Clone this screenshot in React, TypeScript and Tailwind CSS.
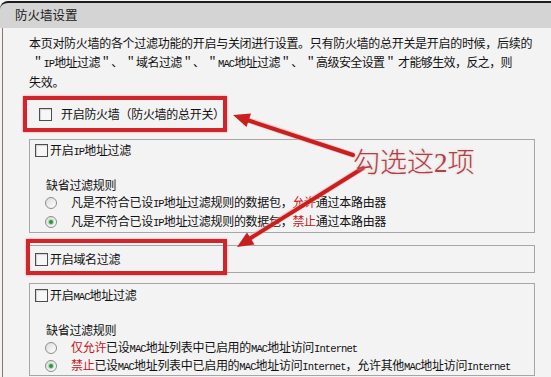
import React from "react";

function Latin({ children }: { children: React.ReactNode }) {
  return (
    <span className="font-['Liberation_Mono',monospace] text-[10.5px] tracking-[-0.9px]">
      {children}
    </span>
  );
}

function Checkbox() {
  return (
    <span className="inline-block w-[13px] h-[13px] border border-[#4d4d4d] bg-[#f7f7f7] shrink-0 shadow-[inset_1px_1px_1px_#d0d0d0]" />
  );
}

function Radio({ checked }: { checked?: boolean }) {
  return (
    <span className="w-[12px] h-[12px] rounded-full border border-[#8c8c8c] bg-gradient-to-br from-[#dcdcdc] to-[#ffffff] flex items-center justify-center shrink-0">
      {checked && (
        <span className="w-[6px] h-[6px] rounded-full bg-[#a8dcb0] flex items-center justify-center">
          <span className="w-[4px] h-[4px] rounded-full bg-[#2e9444]" />
        </span>
      )}
    </span>
  );
}

function Red({ children }: { children: React.ReactNode }) {
  return <span className="text-[#c4161c]">{children}</span>;
}

export default function App() {
  return (
    <div className="w-[551px] h-[377px] bg-[#f3f3f3] relative overflow-hidden font-['Noto_Sans_CJK_SC',sans-serif] text-[12px] tracking-[-0.3px] text-[#111]">
      {/* title bar */}
      <div className="mt-[1px] h-[27px] border-t-2 border-[#1c1c1c] rounded-tl-[8px] bg-[#d4d4d4] flex items-center pl-[15px] text-[12.5px] tracking-normal text-[#1a1a1a]">
        防火墙设置
      </div>

      {/* body */}
      <div className="ml-[2px] border-l border-[#8a766a] h-[349px] pl-[26px] pt-[6px]">
        <div className="leading-[18.5px]">
          <div className="whitespace-nowrap">
            本页对防火墙的各个过滤功能的开启与关闭进行设置。只有防火墙的总开关是开启的时候，后续的
          </div>
          <div className="whitespace-nowrap pl-[3px] tracking-[-0.6px]">
            ＂<Latin>IP</Latin>地址过滤＂、 ＂域名过滤＂、 ＂<Latin>MAC</Latin>地址过滤＂、 ＂高级安全设置＂ 才能够生效，反之，则
          </div>
          <div>失效。</div>
        </div>

        {/* master switch (highlighted) */}
        <div className="mt-[4.5px] -ml-[6px] w-[204px] h-[36px] border-[4px] border-[#d0262b] shadow-[0_0_2px_#f08a8a] flex items-center pl-[12px] gap-[9px]">
          <Checkbox />
          <span className="whitespace-nowrap">开启防火墙（防火墙的总开关）</span>
        </div>

        {/* IP filter */}
        <div className="mt-[7px] w-[506px] h-[94px] border border-[#a6a6a6] pl-[5px] pt-[4px]">
          <div className="flex items-center gap-[2px] h-[13px]">
            <Checkbox />
            <span className="whitespace-nowrap">
              开启<Latin>IP</Latin>地址过滤
            </span>
          </div>
          <div className="mt-[17.5px] pl-[11px] leading-[19px]">缺省过滤规则</div>
          <div className="pl-[10px] flex items-center h-[19px] gap-[14px]">
            <Radio />
            <span className="whitespace-nowrap">
              凡是不符合已设<Latin>IP</Latin>地址过滤规则的数据包，<Red>允许</Red>通过本路由器
            </span>
          </div>
          <div className="pl-[10px] flex items-center h-[19px] gap-[14px]">
            <Radio checked />
            <span className="whitespace-nowrap">
              凡是不符合已设<Latin>IP</Latin>地址过滤规则的数据包，<Red>禁止</Red>通过本路由器
            </span>
          </div>
        </div>

        {/* domain filter */}
        <div className="mt-[12px] w-[506px] h-[28px] border border-[#a6a6a6] pl-[5px] flex items-center gap-[2px]">
          <Checkbox />
          <span className="whitespace-nowrap">开启域名过滤</span>
        </div>

        {/* MAC filter */}
        <div className="mt-[10px] w-[506px] h-[93px] border border-[#a6a6a6] pl-[5px] pt-[5px]">
          <div className="flex items-center gap-[2px] h-[13px]">
            <Checkbox />
            <span className="whitespace-nowrap">
              开启<Latin>MAC</Latin>地址过滤
            </span>
          </div>
          <div className="mt-[17.5px] pl-[11px] leading-[19px]">缺省过滤规则</div>
          <div className="pl-[10px] flex items-center h-[18px] gap-[14px]">
            <Radio />
            <span className="whitespace-nowrap">
              <Red>仅允许</Red>已设<Latin>MAC</Latin>地址列表中已启用的<Latin>MAC</Latin>地址访问<Latin>Internet</Latin>
            </span>
          </div>
          <div className="pl-[10px] flex items-center h-[18px] gap-[14px]">
            <Radio checked />
            <span className="whitespace-nowrap">
              <Red>禁止</Red>已设<Latin>MAC</Latin>地址列表中已启用的<Latin>MAC</Latin>地址访问<Latin>Internet</Latin>，允许其他<Latin>MAC</Latin>地址访问<Latin>Internet</Latin>
            </span>
          </div>
        </div>
      </div>

      {/* annotation: second red box */}
      <div className="absolute left-[26px] top-[239px] w-[201px] h-[36px] border-[4px] border-[#d0262b] shadow-[0_0_2px_#f08a8a]" />

      {/* annotation arrows */}
      <svg className="absolute left-0 top-0" width="551" height="377" viewBox="0 0 551 377">
        <g stroke="#f4b0b0" strokeWidth="6" strokeLinecap="round" opacity="0.6">
          <line x1="353" y1="155" x2="248" y2="120" />
          <line x1="363" y1="168" x2="250" y2="238" />
        </g>
        <g stroke="#c8201e" strokeWidth="4" strokeLinecap="round">
          <line x1="353" y1="155" x2="247" y2="120" />
          <line x1="363" y1="168" x2="250" y2="238.5" />
        </g>
        <polygon points="233,115 251,113.5 246.5,127" fill="#c8201e" />
        <polygon points="237,247 254.5,244.5 247,232.5" fill="#c8201e" />
      </svg>

      <div className="absolute left-[353px] top-[145px] leading-[32px] text-[27px] font-light tracking-normal text-[#a3454a] whitespace-nowrap [text-shadow:0_0_3px_#f8c0c0]">
        勾选这<span className="font-['Liberation_Serif',serif] font-normal">2</span>项
      </div>
    </div>
  );
}
